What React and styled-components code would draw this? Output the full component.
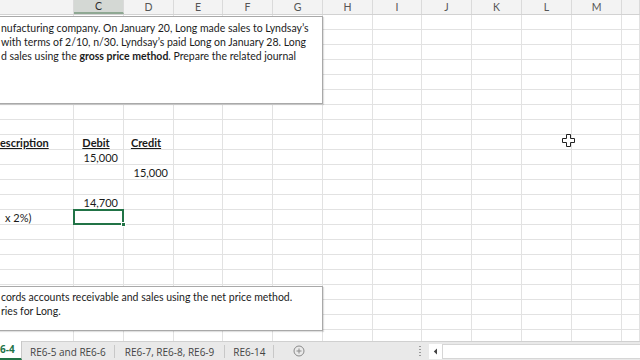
import React from "react";
import styled, { createGlobalStyle } from "styled-components";

const GlobalStyle = createGlobalStyle`
  html, body {
    margin: 0;
    padding: 0;
    overflow: hidden;
    background: #ffffff;
  }
`;

// column widths: B (partly hidden), C..M, N (cut)
const columns = [
  { key: "B", width: 74 },
  { key: "C", width: 50 },
  { key: "D", width: 50 },
  { key: "E", width: 49 },
  { key: "F", width: 50 },
  { key: "G", width: 50 },
  { key: "H", width: 50 },
  { key: "I", width: 49 },
  { key: "J", width: 50 },
  { key: "K", width: 50 },
  { key: "L", width: 50 },
  { key: "M", width: 50 },
  { key: "N", width: 18, hidden: true }
];

const ROW_COUNT = 23;

// cell contents keyed by "row:col"
const cells = {
  "8:B": { text: "escription", head: true, align: "left" },
  "8:C": { text: "Debit", head: true, align: "center" },
  "8:D": { text: "Credit", head: true, align: "center" },
  "9:C": { text: "15,000", align: "right" },
  "10:D": { text: "15,000", align: "right" },
  "12:C": { text: "14,700", align: "right" },
  "13:B": { text: "x 2%)", align: "left", shift: 5 }
};

const selected = "13:C";

const Sheet = styled.div`
  position: relative;
  width: 640px;
  height: 360px;
  display: grid;
  grid-template-rows: 15px 1fr 19px;
  font-family: Lato, "Open Sans", sans-serif;
  color: #1a1a1a;
  overflow: hidden;
`;

const HeaderRow = styled.div`
  display: flex;
  background: #f3f3f3;
  border-bottom: 1px solid #d2d2d2;
  box-sizing: border-box;
`;

const HeaderCell = styled.div`
  flex: none;
  width: ${p => p.$w}px;
  box-sizing: border-box;
  border-right: 1px solid #dadada;
  display: flex;
  align-items: center;
  justify-content: center;
  font-size: 10.5px;
  color: ${p => (p.$active ? "#2b2b2b" : "#555")};
  background: ${p => (p.$active ? "#d4d8d4" : "transparent")};
  border-bottom: ${p => (p.$active ? "2px solid #8fa893" : "none")};
`;

const Body = styled.div`
  overflow: hidden;
  display: flex;
  flex-direction: column;
`;

const Row = styled.div`
  display: flex;
  flex: none;
  height: 15px;
`;

const Cell = styled.div`
  position: relative;
  flex: none;
  width: ${p => p.$w}px;
  height: 15px;
  box-sizing: border-box;
  border-right: 1px solid #e2e2e2;
  border-bottom: 1px solid #e2e2e2;
  display: flex;
  align-items: center;
  justify-content: ${p =>
    p.$align === "right" ? "flex-end" : p.$align === "center" ? "center" : "flex-start"};
  padding: 0 5px 0 0;
  font-size: 11px;
  white-space: nowrap;
  overflow: visible;

  ${p =>
    p.$selected &&
    `
    &::after {
      content: "";
      position: absolute;
      left: -1px;
      top: -1px;
      right: -1px;
      bottom: -1px;
      border: 2px solid #217346;
      z-index: 2;
    }
    &::before {
      content: "";
      position: absolute;
      right: -3px;
      bottom: -3px;
      width: 5px;
      height: 5px;
      background: #217346;
      border: 1px solid #fff;
      box-sizing: border-box;
      z-index: 3;
    }
  `}
`;

const CellText = styled.span`
  margin-left: ${p => p.$shift || 0}px;
  font-weight: ${p => (p.$head ? 700 : 400)};
  text-decoration: ${p => (p.$head ? "underline" : "none")};
  text-underline-offset: 1px;
`;

const TextBox = styled.div`
  position: absolute;
  left: -1px;
  top: ${p => p.$top}px;
  width: 324px;
  height: ${p => p.$h}px;
  box-sizing: border-box;
  background: #ffffff;
  border: 1px solid #a9a9a9;
  box-shadow: 1px 1px 1px rgba(0, 0, 0, 0.12);
  padding: ${p => p.$pt}px 8px 0 1px;
  font-size: 10.5px;
  line-height: 14px;
  color: #1c1c1c;
  z-index: 4;
`;

const Line = styled.div`
  white-space: nowrap;
  b {
    font-weight: 700;
  }
`;

const TabBar = styled.div`
  display: flex;
  align-items: stretch;
  background: #e9e9e9;
  border-top: 1px solid #d0d0d0;
  box-sizing: border-box;
  font-family: "Open Sans", Lato, sans-serif;
  font-size: 10px;
  color: #444;
`;

const Tab = styled.div`
  flex: none;
  display: flex;
  align-items: center;
  padding: 0 ${p => p.$pad}px;
  white-space: nowrap;
  border-right: 1px solid #c8c8c8;
  margin: 3px 0 2px;
`;

const ActiveTab = styled.div`
  flex: none;
  display: flex;
  align-items: center;
  width: 22px;
  padding-bottom: 1px;
  box-sizing: border-box;
  background: #ffffff;
  color: #217346;
  font-weight: 700;
  margin-top: -1px;
  border-bottom: 2px solid #217346;
  border-right: 1px solid #c8c8c8;
`;

const AddButton = styled.div`
  flex: none;
  display: flex;
  align-items: center;
  margin-left: 19px;
  color: #888;
`;

const Spacer = styled.div`
  flex: 1;
`;

const Grip = styled.div`
  flex: none;
  width: 2px;
  margin: 4px 8px 4px 0;
  background: repeating-linear-gradient(
    to bottom,
    #9a9a9a 0 1px,
    transparent 1px 3px
  );
`;

const ScrollButton = styled.div`
  flex: none;
  width: 13px;
  margin: 2px 0 1px;
  background: #ffffff;
  display: flex;
  align-items: center;
  justify-content: center;
`;

const ScrollTrack = styled.div`
  flex: none;
  width: 198px;
  margin: 2px 0 1px;
  background: #ffffff;
  border: 1px solid #d6d6d6;
  border-right: none;
  box-sizing: border-box;
`;

const Cursor = styled.svg`
  position: absolute;
  left: 562px;
  top: 134px;
  z-index: 5;
`;

const AddIcon = () => (
  <svg width="12" height="12" viewBox="0 0 12 12">
    <circle cx="6" cy="6" r="5" fill="none" stroke="#8a8a8a" strokeWidth="1" />
    <path d="M6 3.5v5M3.5 6h5" stroke="#8a8a8a" strokeWidth="1" />
  </svg>
);

export default function App() {
  const rows = Array.from({ length: ROW_COUNT }, (_, i) => i);
  return (
    <>
      <GlobalStyle />
      <Sheet>
        <HeaderRow>
          {columns.map(c => (
            <HeaderCell key={c.key} $w={c.width} $active={c.key === "C"}>
              {c.key === "B" || c.hidden ? "" : c.key}
            </HeaderCell>
          ))}
        </HeaderRow>

        <Body>
          {rows.map(r => (
            <Row key={r}>
              {columns.map(c => {
                const id = r + ":" + c.key;
                const data = cells[id];
                return (
                  <Cell
                    key={c.key}
                    $w={c.width}
                    $align={data ? data.align : "left"}
                    $selected={id === selected}
                  >
                    {data && (
                      <CellText $head={data.head} $shift={data.shift}>
                        {data.text}
                      </CellText>
                    )}
                  </Cell>
                );
              })}
            </Row>
          ))}
        </Body>

        <TabBar>
          <ActiveTab>6-4</ActiveTab>
          <Tab $pad={8}>RE6-5 and RE6-6</Tab>
          <Tab $pad={10}>RE6-7, RE6-8, RE6-9</Tab>
          <Tab $pad={8}>RE6-14</Tab>
          <AddButton>
            <AddIcon />
          </AddButton>
          <Spacer />
          <Grip />
          <ScrollButton>
            <svg width="5" height="7" viewBox="0 0 5 7">
              <path d="M4 0.5L0.8 3.5L4 6.5Z" fill="#444" />
            </svg>
          </ScrollButton>
          <ScrollTrack />
        </TabBar>

        <TextBox $top={16} $h={88} $pt={4}>
          <Line>nufacturing company. On January 20, Long made sales to Lyndsay’s</Line>
          <Line>with terms of 2/10, n/30. Lyndsay’s paid Long on January 28. Long</Line>
          <Line>
            d sales using the <b>gross price method</b>. Prepare the related journal
          </Line>
        </TextBox>

        <TextBox $top={286} $h={45} $pt={3}>
          <Line>cords accounts receivable and sales using the net price method.</Line>
          <Line>ries for Long.</Line>
        </TextBox>

        <Cursor width="13" height="13" viewBox="0 0 13 13">
          <path
            d="M4.5 0.5h4v4h4v4h-4v4h-4v-4h-4v-4h4z"
            fill="#ffffff"
            stroke="#222"
            strokeWidth="1"
          />
        </Cursor>
      </Sheet>
    </>
  );
}
